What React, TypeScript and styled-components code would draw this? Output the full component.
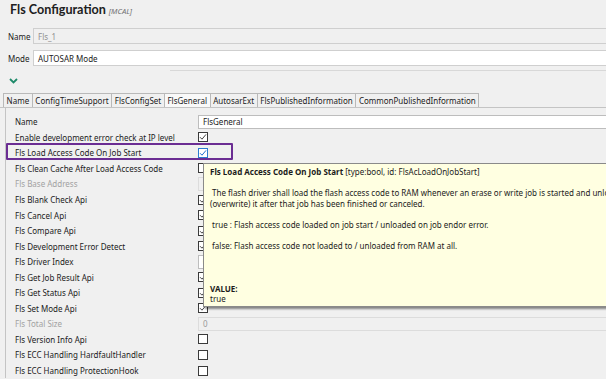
import React from "react";
import styled, { createGlobalStyle, css } from "styled-components";

const GlobalStyle = createGlobalStyle`
  html, body {
    margin: 0;
    padding: 0;
    background: #f0f0f0;
    overflow: hidden;
  }
  body {
    font-family: "Noto Sans", "Open Sans", sans-serif;
    font-size: 8px;
    color: #1b1b1b;
  }
`;

const Page = styled.div`
  position: relative;
  width: 606px;
  height: 379px;
  overflow: hidden;
  display: flex;
  flex-direction: column;
`;

const Header = styled.div`
  display: flex;
  align-items: baseline;
  gap: 3px;
  height: 26px;
  padding: 2px 0 0 10px;
  box-sizing: border-box;
`;

const Title = styled.h1`
  margin: 0;
  font-family: Lato, "Noto Sans", sans-serif;
  font-size: 12.6px;
  font-weight: 700;
  color: #202020;
`;

const Tag = styled.span`
  font-size: 7.6px;
  font-style: italic;
  color: #707070;
`;

const FieldRow = styled.div`
  display: flex;
  align-items: center;
  height: 16px;
  margin-top: ${(p: { $gap: number }) => p.$gap}px;
`;

const FieldLabel = styled.span`
  width: 33px;
  padding-left: 8px;
  box-sizing: border-box;
  flex-shrink: 0;
`;

const FieldInput = styled.div<{ $disabled?: boolean }>`
  flex: 1;
  height: 16px;
  box-sizing: border-box;
  display: flex;
  align-items: center;
  padding-left: 4px;
  border: 1px solid #cfcfcf;
  border-right: none;
  background: ${(p) => (p.$disabled ? "#f0f0f0" : "#ffffff")};
  color: ${(p) => (p.$disabled ? "#909090" : "#1b1b1b")};
`;

const Divider = styled.div`
  height: 1px;
  margin: 4px 0 0 170px;
  background: #d8d8d8;
`;

const Chevron = styled.div`
  height: 20px;
  display: flex;
  align-items: center;
  padding-left: 9px;
`;

const TabBar = styled.div`
  display: flex;
  margin-top: 2px;
  padding-left: 3px;
  height: 14px;
  border-bottom: 1px solid #c4c4c4;
`;

const Tab = styled.div<{ $active?: boolean }>`
  display: flex;
  align-items: center;
  padding: 0 2.6px;
  border: 1px solid #b9b9b9;
  border-bottom: none;
  margin-right: -1px;
  background: ${(p) => (p.$active ? "#f9f9f9" : "#f0f0f0")};
  white-space: nowrap;
`;

const Table = styled.div`
  margin-left: 5px;
  border-left: 1px solid #c4c4c4;
  padding-top: 6px;
  display: grid;
  grid-template-columns: 192px 1fr;
  grid-auto-rows: 15.55px;
`;

const Row = styled.div`
  display: contents;
`;

const Label = styled.div<{ $disabled?: boolean; $highlight?: boolean }>`
  position: relative;
  display: flex;
  align-items: center;
  padding-left: 9px;
  white-space: nowrap;
  color: ${(p) => (p.$disabled ? "#a2a2a2" : "#1b1b1b")};
  ${(p) =>
    p.$highlight &&
    css`
      &::after {
        content: "";
        position: absolute;
        left: 0;
        top: -2px;
        width: 227px;
        height: 17px;
        box-sizing: border-box;
        border: 2.5px solid #6b2d93;
        border-radius: 1px;
      }
    `}
`;

const Cell = styled.div`
  display: flex;
  align-items: center;
`;

const ValueBox = styled.div<{ $disabled?: boolean }>`
  flex: 1;
  height: 14px;
  box-sizing: border-box;
  display: flex;
  align-items: center;
  padding-left: 4px;
  border: 1px solid ${(p) => (p.$disabled ? "#dcdcdc" : "#bdbdbd")};
  border-right: none;
  background: ${(p) => (p.$disabled ? "#f0f0f0" : "#ffffff")};
  color: ${(p) => (p.$disabled ? "#9a9a9a" : "#1b1b1b")};
`;

const Box = styled.div<{ $blue?: boolean }>`
  width: 10px;
  height: 10px;
  box-sizing: border-box;
  border: 1px solid ${(p) => (p.$blue ? "#2c7bd0" : "#3a3a3a")};
  background: #ffffff;
  display: flex;
  align-items: center;
  justify-content: center;
`;

const Tooltip = styled.div`
  position: absolute;
  left: 203px;
  top: 163px;
  width: 430px;
  box-sizing: border-box;
  padding: 3px 0 1px 6px;
  background: #ffffe1;
  border: 1px solid #8a8a8a;
  box-shadow: 2px 2px 2px rgba(0, 0, 0, 0.45);
  line-height: 10.6px;
  color: #1b1b1b;
`;

const TipLine = styled.div`
  height: 10.6px;
  white-space: pre;
`;

const Check = ({ blue }: { blue?: boolean }) => (
  <Box $blue={blue}>
    <svg width="8" height="8" viewBox="0 0 8 8">
      <path
        d="M1 4.2 L3 6.2 L7 1.4"
        fill="none"
        stroke={blue ? "#1f6fd1" : "#444"}
        strokeWidth="1"
      />
    </svg>
  </Box>
);

type Item = {
  label: string;
  kind: "text" | "check" | "empty";
  value?: string;
  disabled?: boolean;
  highlight?: boolean;
  blue?: boolean;
};

const items: Item[] = [
  { label: "Name", kind: "text", value: "FlsGeneral" },
  { label: "Enable development error check at IP level", kind: "check" },
  { label: "Fls Load Access Code On Job Start", kind: "check", highlight: true, blue: true },
  { label: "Fls Clean Cache After Load Access Code", kind: "empty" },
  { label: "Fls Base Address", kind: "text", value: "0", disabled: true },
  { label: "Fls Blank Check Api", kind: "check" },
  { label: "Fls Cancel Api", kind: "check" },
  { label: "Fls Compare Api", kind: "check" },
  { label: "Fls Development Error Detect", kind: "check" },
  { label: "Fls Driver Index", kind: "text", value: "0" },
  { label: "Fls Get Job Result Api", kind: "check" },
  { label: "Fls Get Status Api", kind: "check" },
  { label: "Fls Set Mode Api", kind: "check" },
  { label: "Fls Total Size", kind: "text", value: "0", disabled: true },
  { label: "Fls Version Info Api", kind: "empty" },
  { label: "Fls ECC Handling HardfaultHandler", kind: "empty" },
  { label: "Fls ECC Handling ProtectionHook", kind: "empty" },
];

const tabs = [
  "Name",
  "ConfigTimeSupport",
  "FlsConfigSet",
  "FlsGeneral",
  "AutosarExt",
  "FlsPublishedInformation",
  "CommonPublishedInformation",
];

export default function App() {
  return (
    <>
      <GlobalStyle />
      <Page>
        <Header>
          <Title>Fls Configuration</Title>
          <Tag>[MCAL]</Tag>
        </Header>
        <FieldRow $gap={2}>
          <FieldLabel>Name</FieldLabel>
          <FieldInput $disabled>Fls_1</FieldInput>
        </FieldRow>
        <FieldRow $gap={6}>
          <FieldLabel>Mode</FieldLabel>
          <FieldInput>AUTOSAR Mode</FieldInput>
        </FieldRow>
        <Divider />
        <Chevron>
          <svg width="9" height="6" viewBox="0 0 9 6">
            <path d="M1 1 L4.5 4.5 L8 1" fill="none" stroke="#1f8a6a" strokeWidth="1.8" />
          </svg>
        </Chevron>
        <TabBar>
          {tabs.map((t) => (
            <Tab key={t} $active={t === "FlsGeneral"}>
              {t}
            </Tab>
          ))}
        </TabBar>
        <Table>
          {items.map((it) => (
            <Row key={it.label}>
              <Label $disabled={it.disabled} $highlight={it.highlight}>
                {it.label}
              </Label>
              <Cell>
                {it.kind === "text" && (
                  <ValueBox $disabled={it.disabled}>{it.value}</ValueBox>
                )}
                {it.kind === "check" && <Check blue={it.blue} />}
                {it.kind === "empty" && <Box />}
              </Cell>
            </Row>
          ))}
        </Table>
        <Tooltip>
          <TipLine>
            <b>Fls Load Access Code On Job Start</b> [type:bool, id: FlsAcLoadOnJobStart]
          </TipLine>
          <TipLine />
          <TipLine>
            {" The flash driver shall load the flash access code to RAM whenever an erase or write job is started and unload"}
          </TipLine>
          <TipLine>(overwrite) it after that job has been finished or canceled.</TipLine>
          <TipLine />
          <TipLine>{" true : Flash access code loaded on job start / unloaded on job endor error."}</TipLine>
          <TipLine />
          <TipLine>{" false: Flash access code not loaded to / unloaded from RAM at all."}</TipLine>
          <TipLine />
          <TipLine />
          <TipLine />
          <TipLine>
            <b>VALUE:</b>
          </TipLine>
          <TipLine>true</TipLine>
        </Tooltip>
      </Page>
    </>
  );
}
